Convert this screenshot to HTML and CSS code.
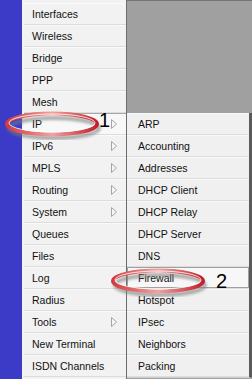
FILE: index.html
```html
<!DOCTYPE html>
<html>

<head>
    <meta charset="UTF-8">
    <title>WinBox menu</title>
    <link rel="stylesheet" href="styles.css">
</head>

<body>
<div class="screen">
    <div class="sidebar"></div>

    <ul class="menu main-menu">
        <li>Interfaces</li>
        <li>Wireless</li>
        <li>Bridge</li>
        <li>PPP</li>
        <li>Mesh</li>
        <li class="active">IP <svg class="arrow" width="6" height="10" viewBox="0 0 6 10"><path d="M0.5 0.5V9.5L5.5 5Z" /></svg></li>
        <li>IPv6 <svg class="arrow" width="6" height="10" viewBox="0 0 6 10"><path d="M0.5 0.5V9.5L5.5 5Z" /></svg></li>
        <li>MPLS <svg class="arrow" width="6" height="10" viewBox="0 0 6 10"><path d="M0.5 0.5V9.5L5.5 5Z" /></svg></li>
        <li>Routing <svg class="arrow" width="6" height="10" viewBox="0 0 6 10"><path d="M0.5 0.5V9.5L5.5 5Z" /></svg></li>
        <li>System <svg class="arrow" width="6" height="10" viewBox="0 0 6 10"><path d="M0.5 0.5V9.5L5.5 5Z" /></svg></li>
        <li>Queues</li>
        <li>Files</li>
        <li>Log</li>
        <li>Radius</li>
        <li>Tools <svg class="arrow" width="6" height="10" viewBox="0 0 6 10"><path d="M0.5 0.5V9.5L5.5 5Z" /></svg></li>
        <li>New Terminal</li>
        <li>ISDN Channels</li>
    </ul>

    <div class="workspace">
        <ul class="menu submenu">
            <li>ARP</li>
            <li>Accounting</li>
            <li>Addresses</li>
            <li>DHCP Client</li>
            <li>DHCP Relay</li>
            <li>DHCP Server</li>
            <li>DNS</li>
            <li class="active">Firewall</li>
            <li>Hotspot</li>
            <li>IPsec</li>
            <li>Neighbors</li>
            <li>Packing</li>
        </ul>
    </div>

    <!-- annotation rings -->
    <svg class="ring ring-ip" width="104" height="34" viewBox="0 0 104 34">
        <defs>
            <linearGradient id="red1" x1="0" y1="0" x2="1" y2="0">
                <stop offset="0" stop-color="#d63a3e" />
                <stop offset="0.5" stop-color="#eea3a2" />
                <stop offset="1" stop-color="#c2212a" />
            </linearGradient>
            <filter id="blur1"><feGaussianBlur stdDeviation="1.8" /></filter>
        </defs>
        <ellipse cx="52" cy="19" rx="45" ry="10" fill="none" stroke="#7a7a7a" stroke-width="3.5" opacity="0.7" filter="url(#blur1)" />
        <ellipse cx="50" cy="15" rx="45" ry="10.5" fill="none" stroke="url(#red1)" stroke-width="4" />
        <ellipse cx="50" cy="14" rx="43" ry="9" fill="none" stroke="#ffffff" stroke-width="1" opacity="0.8" />
    </svg>
    <span class="num num-1">1</span>

    <svg class="ring ring-fw" width="104" height="34" viewBox="0 0 104 34">
        <defs>
            <linearGradient id="red2" x1="0" y1="0" x2="1" y2="0">
                <stop offset="0" stop-color="#d63a3e" />
                <stop offset="0.5" stop-color="#eea3a2" />
                <stop offset="1" stop-color="#c2212a" />
            </linearGradient>
            <filter id="blur2"><feGaussianBlur stdDeviation="1.8" /></filter>
        </defs>
        <ellipse cx="52" cy="19" rx="45" ry="10" fill="none" stroke="#7a7a7a" stroke-width="3.5" opacity="0.7" filter="url(#blur2)" />
        <ellipse cx="50" cy="15" rx="45" ry="10.5" fill="none" stroke="url(#red2)" stroke-width="4" />
        <ellipse cx="50" cy="14" rx="43" ry="9" fill="none" stroke="#ffffff" stroke-width="1" opacity="0.8" />
    </svg>
    <span class="num num-2">2</span>
</div>
</body>
</html>
```

FILE: styles.css
```css
body {
    margin: 0;
    background-color: #a0a0a0;
}

.screen {
    position: relative;
    display: flex;
    width: 252px;
    height: 379px;
    overflow: hidden;
    font-family: "Liberation Sans", Arial, sans-serif;
    font-size: 10.5px;
    color: #111;
}

.sidebar {
    width: 22px;
    flex: none;
    background-color: #3b3bc8;
}

.menu {
    list-style: none;
    margin: 0;
    padding: 0;
    background-color: #f0f0f0;
}

.menu li {
    display: flex;
    align-items: center;
    justify-content: space-between;
    height: 21px;
    border-bottom: 1px solid #dcdcdc;
    box-shadow: inset 0 1px 0 #fafafa;
}

.main-menu {
    width: 102px;
    flex: none;
    padding-top: 3px;
    padding-left: 2px;
    background-color: #f2f2f2;
}

.main-menu li {
    padding: 0 9px 0 8px;
}

.main-menu li.active {
    background-color: #f8f8f8;
    box-shadow: inset 0 1px 0 #a8a8a8;
}

.arrow path {
    fill: #f6f6f6;
    stroke: #a5a5a5;
    stroke-width: 1;
}

.workspace {
    flex: 1;
    background-color: #a0a0a0;
    border-top: 1px solid #767676;
    border-left: 1px solid #6c6c6c;
    padding-top: 112px;
}

.submenu {
    width: 122px;
    border-right: 3px solid #5a5a5a;
    border-bottom: 1px solid #d0d0d0;
}

.submenu li {
    padding: 0 0 0 11px;
}

.submenu li.active {
    background-color: #f7f7f7;
    box-shadow: inset 0 0 0 1px #a0a0a0;
}

.ring {
    position: absolute;
}

.ring-ip {
    left: 2px;
    top: 109px;
}

.ring-fw {
    left: 108px;
    top: 266px;
}

.num {
    position: absolute;
    font-size: 20px;
    line-height: 1;
    color: #000;
}

.num-1 {
    left: 99px;
    top: 110px;
}

.num-2 {
    left: 216px;
    top: 271px;
}
```
